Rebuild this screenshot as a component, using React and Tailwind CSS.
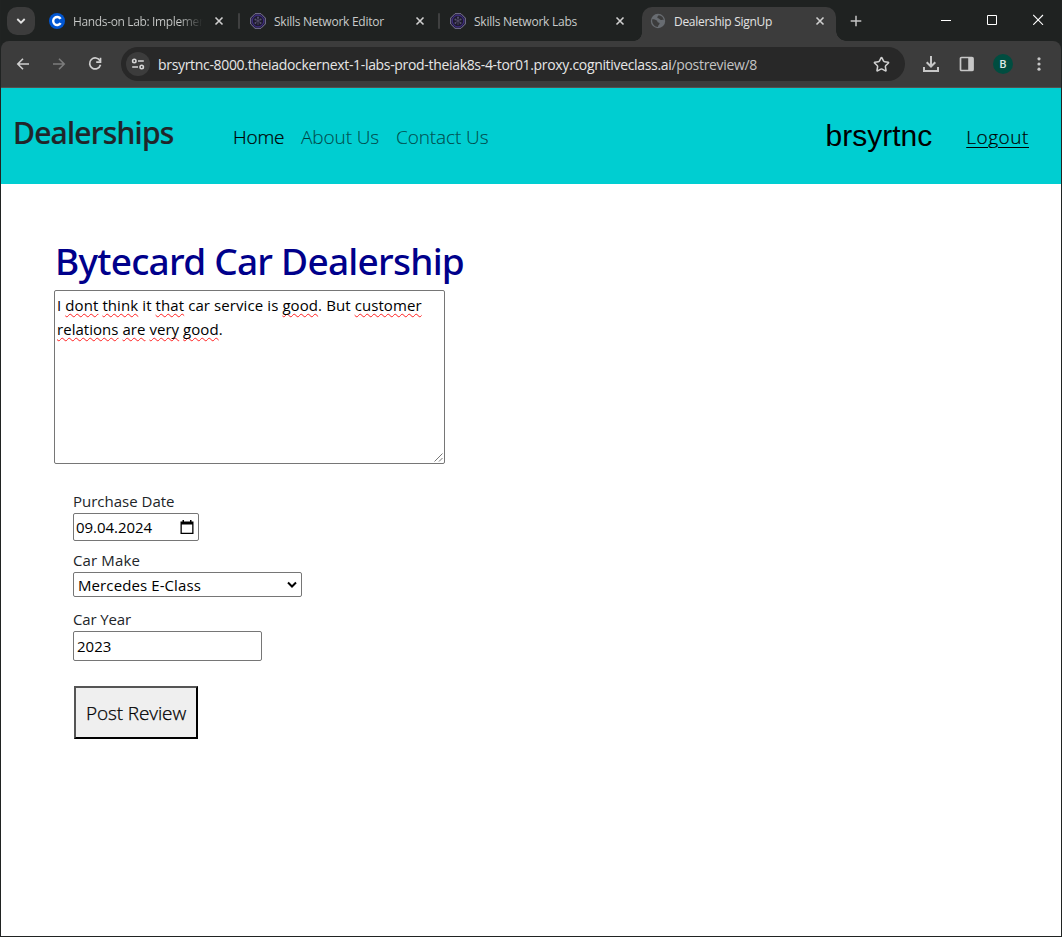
import { Star } from "lucide-react";

function Close({ className = "" }) {
  return (
    <svg viewBox="0 0 16 16" className={"h-4 w-4 shrink-0 " + className} fill="none" stroke="#cfcfcf" strokeWidth="1.6">
      <path d="M4.500 4.500l7 7M11.500 4.500l-7 7" />
    </svg>
  );
}

function CourseraIcon() {
  return (
    <svg viewBox="0 0 16 16" className="h-4 w-4 shrink-0">
      <circle cx="8" cy="8" r="8" fill="#0056d2" />
      <path d="M11.600 5.900A4 4 0 1 0 11.600 10.100" fill="none" stroke="#fff" strokeWidth="2.400" />
    </svg>
  );
}

function SkillsIcon() {
  return (
    <svg viewBox="0 0 16 16" className="h-4 w-4 shrink-0" fill="none">
      <path d="M5 .7h6L15.300 5v6L11 15.300H5L.7 11V5z" fill="#1d1a2c" stroke="#7e789c" strokeWidth="1" />
      <circle cx="8" cy="8" r="5.800" stroke="#3d2c80" strokeWidth="1.200" />
      <path d="M8 4v8M5.200 6.400L8 7.800l2.800-1.400M5.200 10L8 7.800l2.800 2.200" stroke="#57516f" strokeWidth=".8" />
      <g fill="#57516f">
        <circle cx="8" cy="4.600" r="1.100" />
        <circle cx="5.400" cy="6.600" r="1" />
        <circle cx="10.600" cy="6.600" r="1" />
        <circle cx="5.400" cy="10" r=".9" />
        <circle cx="10.600" cy="10" r=".9" />
      </g>
    </svg>
  );
}

function GlobeIcon() {
  return (
    <svg viewBox="0 0 16 16" className="h-4 w-4 shrink-0">
      <circle cx="8" cy="8" r="7.200" fill="#686c71" />
      <path d="M2.200 6.200c2 .1 3.400.3 4.600 1.300.9.8.3 1.800 1.500 2 1.600.2 1.600 1.400.7 2.200-.8.7-.9 1.400-1 2.200-3.400 0-6.300-3-5.800-7.700z" fill="#3c3c3c" />
      <path d="M8.600 2.200c-.3 1-1.300 1-1.300 2 0 1.200 1.700.9 2.200 1.800.5.9 1.300 1.200 2.300.9.9-.3 1.500-.1 2 .3C13.600 4.600 11.500 2.300 8.600 2.200z" fill="#3c3c3c" />
    </svg>
  );
}

function Tab({ icon, title }) {
  return (
    <div className="flex h-7 w-[194px] items-center pl-[8px] pr-2">
      {icon}
      <div className="ml-2 w-[130px] shrink-0 overflow-hidden whitespace-nowrap pt-px">{title}</div>
      <Close className="ml-auto" />
    </div>
  );
}

function Separator() {
  return (
    <div className="flex h-7 w-[6px] items-center justify-center">
      <div className="h-4 w-[2px] rounded-full bg-[#3f4040]" />
    </div>
  );
}

function TabStrip() {
  return (
    <div className="flex h-[41px] bg-[#1f2221] pl-[6px] pt-[7px] text-[12px] leading-7 text-[#c9cbca]">
      <div className="flex h-7 w-7 shrink-0 items-center justify-center rounded-[10px] bg-[#3c3c3c]">
        <svg viewBox="0 0 10 8" className="h-2 w-[10px]" fill="none" stroke="#e3e3e3" strokeWidth="1.800">
          <path d="M1.300 2l3.700 3.700L8.700 2" />
        </svg>
      </div>
      <div className="ml-[7px] flex shrink-0">
        <div className="-ml-px mr-px">
          <Tab
            icon={<CourseraIcon />}
            title={
              <span className="bg-linear-to-r from-[#c9cbca] from-[82%] to-[#1f2221] bg-clip-text tracking-[-0.36px] text-transparent">
                Hands-on Lab: Implemer
              </span>
            }
          />
        </div>
        <Separator />
        <Tab icon={<SkillsIcon />} title={<span className="tracking-[-0.25px]">Skills Network Editor</span>} />
        <Separator />
        <Tab icon={<SkillsIcon />} title={<span className="tracking-[-0.25px]">Skills Network Labs</span>} />
      </div>
      <div className="ml-[-2px] flex shrink-0 items-end">
        <div className="h-[8px] w-[8px] bg-[radial-gradient(circle_at_0_0,#1f2221_7.5px,#3c3c3c_8px)]" />
        <div className="h-[34px] rounded-t-[10px] bg-[#3c3c3c] text-[#e3e3e3]">
          <Tab icon={<GlobeIcon />} title={<span className="tracking-[-0.29px]">Dealership SignUp</span>} />
        </div>
        <div className="h-[10px] w-[10px] bg-[radial-gradient(circle_at_100%_0,#1f2221_9.5px,#3c3c3c_10px)]" />
      </div>
      <svg viewBox="0 0 12 12" className="ml-1 mt-2 h-3 w-3 shrink-0" stroke="#c4c4c4" strokeWidth="1.500">
        <path d="M6 .7v10.600M.7 6h10.600" />
      </svg>
      <div className="ml-auto mr-[17px] mt-[7px] flex gap-[35px]">
        <svg viewBox="0 0 11 11" className="h-[11px] w-[11px]" stroke="#fff">
          <path d="M0 6.500h10" />
        </svg>
        <svg viewBox="0 0 11 11" className="h-[11px] w-[11px]" fill="none" stroke="#fff">
          <path d="M.5 1.500h9v9h-9z" />
        </svg>
        <svg viewBox="0 0 11 11" className="h-[11px] w-[11px]" stroke="#fff" strokeWidth="1.100">
          <path d="M.2 1l9.800 9.800M10 1L.2 10.800" />
        </svg>
      </div>
    </div>
  );
}

function Toolbar() {
  return (
    <div className="bg-[#1f2221]">
      <div className="flex h-[47px] items-center rounded-t-lg border-b border-[#55504f] bg-[#3c3c3c] pl-[14px]">
        <svg viewBox="0 0 16 16" className="h-4 w-4" fill="none" stroke="#d0d0d0" strokeWidth="1.600">
          <path d="M14 8H3M8 2.800L2.800 8 8 13.200" />
        </svg>
        <svg viewBox="0 0 16 16" className="ml-5 h-4 w-4" fill="none" stroke="#7c7c7c" strokeWidth="1.600">
          <path d="M2 8h11M8 2.800L13.200 8 8 13.200" />
        </svg>
        <svg viewBox="0 0 16 16" className="ml-5 h-4 w-4" fill="none" stroke="#d0d0d0" strokeWidth="1.700">
          <path d="M13 4.800A5.500 5.500 0 1 0 13.500 8.800" />
          <path d="M13.500 1.800v4.300H9.200" />
        </svg>
        <div className="ml-[18px] flex h-[34px] w-[784px] items-center rounded-full bg-[#282828] pl-[5px] pr-[15px]">
          <div className="flex h-6 w-6 shrink-0 items-center justify-center rounded-full bg-[#3c3c3c]">
            <svg viewBox="0 0 14 12" className="h-3 w-[14px]" fill="none" stroke="#d6d6d6" strokeWidth="1.600">
              <circle cx="3.300" cy="3" r="1.700" />
              <path d="M7 3h5.800M1.200 9h5.800" />
              <circle cx="10.700" cy="9" r="1.700" />
            </svg>
          </div>
          <div className="ml-2 mt-px whitespace-nowrap text-[14px] leading-5 tracking-[-0.325px] text-[#e6e6e6]">
            brsyrtnc-8000.theiadockernext-1-labs-prod-theiak8s-4-tor01.proxy.cognitiveclass.ai
            <span className="text-[#c4c4c4]">/postreview/8</span>
          </div>
          <Star className="ml-auto h-[17px] w-[17px] text-[#d0d0d0]" strokeWidth={2.2} strokeLinejoin="miter" />
        </div>
        <svg viewBox="0 0 16 16" className="ml-[18px] h-4 w-4" fill="none" stroke="#c7c7c7" strokeWidth="2">
          <path d="M8 0v10M3.700 6.200L8 10.500l4.300-4.300M1 11v4h14v-4" />
        </svg>
        <svg viewBox="0 0 16 16" className="ml-5 h-4 w-4" fill="none">
          <rect x="1.500" y="1.500" width="12.500" height="13" rx="1" stroke="#c7c7c7" strokeWidth="1.700" />
          <path d="M9.200 1.500h5v13h-5z" fill="#c7c7c7" />
        </svg>
        <div className="ml-[18px] flex h-5 w-5 items-center justify-center rounded-full bg-[#004d40] font-[Roboto] text-[11px] font-medium leading-none text-[#dce8e5]">
          B
        </div>
        <svg viewBox="0 0 4 16" className="ml-[24px] h-4 w-1" fill="#c7c7c7">
          <circle cx="2" cy="2.800" r="1.600" />
          <circle cx="2" cy="8" r="1.600" />
          <circle cx="2" cy="13.200" r="1.600" />
        </svg>
      </div>
    </div>
  );
}

function Navbar() {
  return (
    <nav className="flex h-24 items-start whitespace-nowrap bg-[#00ced1] pl-3 pr-8 text-[19px] font-light [-webkit-text-stroke-width:0.2px]">
      <div className="mt-[25px] w-[162px] font-['Noto_Sans'] text-[30px] font-medium leading-10 tracking-[-0.77px] text-[#212529]">
        Dealerships
      </div>
      <div className="ml-[58px] mt-[34px] flex gap-[17px] leading-[30px]">
        <a className="w-[51px] tracking-[-0.2px] text-black">Home</a>
        <a className="w-[78px] tracking-[-0.1px] text-black/60">About Us</a>
        <a className="tracking-[-0.1px] text-black/60">Contact Us</a>
      </div>
      <div className="ml-auto mt-[28px] font-['Liberation_Sans'] text-[30px] font-normal leading-10 text-black [-webkit-text-stroke-width:0]">
        brsyrtnc
      </div>
      <a className="ml-[34px] mt-[34px] leading-[30px] tracking-[0.55px] text-black underline decoration-1 underline-offset-[3px]">Logout</a>
    </nav>
  );
}

function Misspelt({ children }) {
  return (
    <span className="underline decoration-[#ff2020] decoration-wavy decoration-[1.3px] underline-offset-[2px] [text-decoration-skip-ink:none]">
      {children}
    </span>
  );
}

function ReviewForm() {
  return (
    <div className="flex flex-col items-start pl-[53px] pt-[53px] text-[15px] leading-6 text-black">
      <h1 className="ml-px whitespace-nowrap font-['Noto_Sans'] text-[37px] font-medium leading-[48px] tracking-[-0.75px] text-[#00008b]">
        Bytecard Car Dealership
      </h1>
      <div className="mt-[5px] flex h-[174px] w-[391px] flex-col rounded-[2px] border border-[#767676] p-[2px]">
        <div className="whitespace-nowrap tracking-[0.09px]">
          I <Misspelt>dont</Misspelt> <Misspelt>think</Misspelt> it <Misspelt>that</Misspelt> car service is{" "}
          <Misspelt>good</Misspelt>. But <Misspelt>customer</Misspelt>
        </div>
        <div className="whitespace-nowrap tracking-[0.04px]">
          <Misspelt>relations</Misspelt> <Misspelt>are</Misspelt> <Misspelt>very</Misspelt> <Misspelt>good</Misspelt>.
        </div>
        <svg viewBox="0 0 9 9" className="ml-auto mr-[-1px] mt-auto -mb-px h-[9px] w-[9px]" stroke="#666" strokeWidth=".9">
          <path d="M.5 8.500l8-8M5 8.500L8.500 5" />
        </svg>
      </div>

      <div className="ml-[19px] mt-[25px] flex flex-col items-start">
        <label className="h-[24px] text-[#212529]">Purchase Date</label>
        <div className="flex h-[28px] w-[126px] items-center rounded-[2px] border border-[#767676] pl-[2px] pr-1">
          <span className="tracking-[-0.05px]">09.04.2024</span>
          <svg viewBox="0 0 14 15" className="ml-auto h-[15px] w-[14px]">
            <path d="M2.500 0h1.500v1.500h6V0h1.500v1.500H13.500v12.500H.5V1.500h2zM1.800 4.500v8.200h10.400V4.500z" fill="#000" fillRule="evenodd" />
          </svg>
        </div>
        <label className="mt-[7px] h-[24px] tracking-[0.13px] text-[#212529]">Car Make</label>
        <div className="flex h-[25px] w-[229px] items-center rounded-[2px] border border-[#767676] pl-1 pr-1">
          <span className="tracking-[0.1px]">Mercedes E-Class</span>
          <svg viewBox="0 0 10 8" className="ml-auto h-2 w-[10px]" fill="none" stroke="#000" strokeWidth="2">
            <path d="M1 1.500l4 4 4-4" />
          </svg>
        </div>
        <label className="mt-[10px] h-[24px] tracking-[-0.13px] text-[#212529]">Car Year</label>
        <div className="flex h-[30px] w-[189px] items-center rounded-[2px] border border-[#767676] pl-[3px]">2023</div>
        <button className="ml-px mt-[25px] h-[53px] w-[124px] border-2 border-b-black border-l-[#555] border-r-black border-t-[#555] bg-[#efefef] text-[19px] font-light tracking-[-0.12px] [-webkit-text-stroke-width:0.25px]">
          Post Review
        </button>
      </div>
    </div>
  );
}

export default function App() {
  return (
    <div className="h-[937px] w-[1062px] overflow-hidden border-x border-b border-[#202322] bg-white font-['Open_Sans',sans-serif]">
      <TabStrip />
      <Toolbar />
      <Navbar />
      <ReviewForm />
    </div>
  );
}
